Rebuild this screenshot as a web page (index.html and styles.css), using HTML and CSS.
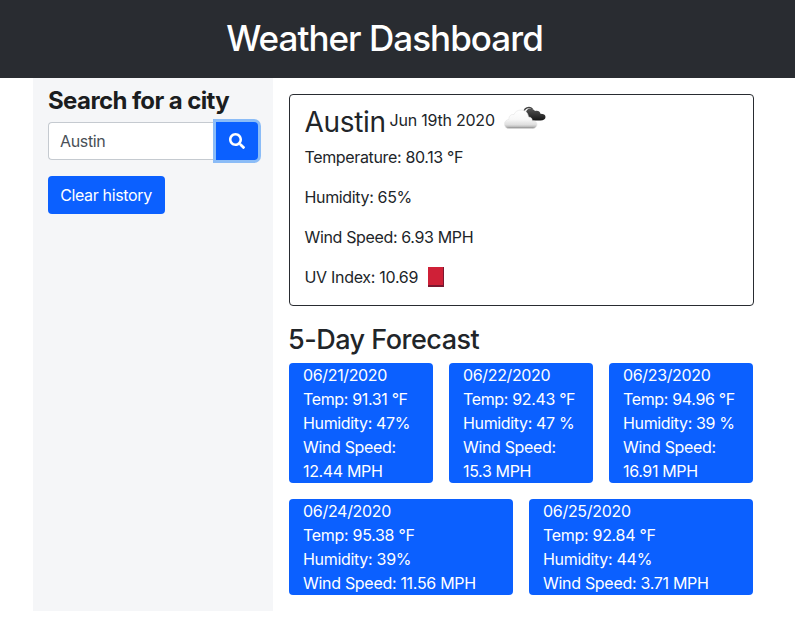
FILE: index.html
```html
<!DOCTYPE html>
<html lang="en">
<head>
<meta charset="utf-8">
<title>Weather Dashboard</title>
<link rel="stylesheet" href="styles.css">
</head>
<body>
<header class="banner"><h1>Weather Dashboard</h1></header>
<main class="container">
  <aside class="sidebar">
    <h2 class="search-title">Search for a city</h2>
    <form class="search">
      <input class="search-input" type="text" value="Austin" aria-label="City">
      <button class="search-button" type="button" aria-label="Search">
        <svg width="16" height="16" viewBox="0 0 512 512" fill="currentColor"><path d="M505 442.7L405.300 343c-4.500-4.500-10.600-7-17-7H372c27.600-35.300 44-79.700 44-128C416 93.100 322.900 0 208 0S0 93.100 0 208s93.100 208 208 208c48.300 0 92.700-16.400 128-44v16.300c0 6.400 2.500 12.500 7 17l99.700 99.700c9.400 9.400 24.600 9.400 33.900 0l28.300-28.300c9.400-9.400 9.400-24.600.1-34zM208 336c-70.700 0-128-57.200-128-128 0-70.700 57.200-128 128-128 70.700 0 128 57.200 128 128 0 70.700-57.200 128-128 128z"/></svg>
      </button>
    </form>
    <button class="clear-button" type="button">Clear history</button>
  </aside>
  <div class="content">
    <section class="current">
      <div class="current-head">
        <h2 class="city">Austin</h2>
        <span class="date">Jun 19th 2020</span>
        <svg class="weather-icon" width="42" height="24" viewBox="0 0 42 24">
          <defs>
            <linearGradient id="light" x1="0" y1="0" x2="0" y2="1"><stop offset="0" stop-color="#fff"/><stop offset=".5" stop-color="#f8f8f8"/><stop offset=".8" stop-color="#dedede"/><stop offset=".91" stop-color="#bbb"/><stop offset="1" stop-color="#777"/></linearGradient>
            <linearGradient id="dark" x1="0" y1="0" x2="0" y2="1"><stop offset="0" stop-color="#555"/><stop offset="1" stop-color="#151515"/></linearGradient>
          </defs>
          <path d="M19.500 7C20 3.500 22.500 1.500 25 1.500c1.500 0 2.500.5 3.500 1.500" fill="none" stroke="#444" stroke-width="1.300"/>
          <path d="M22 7c0-3 2-4.500 4-4.500 2 0 4 1 5 2.500 3-.8 5 .5 5.500 2.800 3 0 5 1.200 5 3.200s-2 3.500-5 3.500H26z" fill="url(#dark)"/>
          <path d="M5 22.500C2 22.500.5 20.500.5 18s2-4.500 4.500-4.500C4.500 10 7 8 10 8.500 11 5.500 14 4 17 4c4.500 0 7 3 7.500 7 3 0 4 2 3.500 4 3-.5 5 1.200 5 3.500s-2 4-4.500 4z" fill="url(#light)" stroke="#e4e4e4" stroke-width=".6"/>
        </svg>
      </div>
      <p>Temperature: 80.13 °F</p>
      <p>Humidity: 65%</p>
      <p>Wind Speed: 6.93 MPH</p>
      <p class="uv">UV Index: 10.69 <span class="uv-level"></span></p>
    </section>
    <h2 class="forecast-title">5-Day Forecast</h2>
    <section class="forecast">
      <article class="day">06/21/2020<br>Temp: 91.31 °F<br>Humidity: 47%<br>Wind Speed:<br>12.44 MPH</article>
      <article class="day">06/22/2020<br>Temp: 92.43 °F<br>Humidity: 47 %<br>Wind Speed:<br>15.3 MPH</article>
      <article class="day">06/23/2020<br>Temp: 94.96 °F<br>Humidity: 39 %<br>Wind Speed:<br>16.91 MPH</article>
      <article class="day wide">06/24/2020<br>Temp: 95.38 °F<br>Humidity: 39%<br>Wind Speed: 11.56 MPH</article>
      <article class="day wide">06/25/2020<br>Temp: 92.84 °F<br>Humidity: 44%<br>Wind Speed: 3.71 MPH</article>
    </section>
  </div>
</main>
</body>
</html>
```
FILE: styles.css
```css
* { box-sizing: border-box; }
body {
  margin: 0;
  background: #fff;
  color: #212529;
  font: 16px/24px Inter, "Liberation Sans", sans-serif;
  letter-spacing: -0.35px;
}
h1, h2, p { margin: 0; }
button, input { font: inherit; letter-spacing: inherit; }
.banner {
  height: 78px;
  padding: 16px 26px 0 0;
  background: #292c31;
  color: #fff;
  text-align: center;
}
.banner h1 { font-size: 35px; line-height: 45px; font-weight: 550; letter-spacing: -0.97px; }
.container { display: flex; width: 720px; height: 533px; margin-left: 33px; }
.sidebar { width: 240px; padding: 8px 15px; background: #f5f6f8; }
.search-title { font-size: 24px; line-height: 29px; font-weight: 700; letter-spacing: -0.6px; margin-bottom: 7px; color: #1b1d20; }
.search { display: flex; margin-bottom: 16px; }
.search-input {
  width: 168px;
  height: 38px;
  padding: 6px 11px;
  border: 1px solid #c5cad0;
  border-right: 0;
  border-radius: 4px 0 0 4px;
  background: #fff;
  color: #495057;
  outline: 0;
}
.search-button {
  display: flex;
  align-items: center;
  justify-content: center;
  width: 42px;
  height: 38px;
  padding: 0;
  border: 0;
  border-radius: 0 4px 4px 0;
  background: #0b60ff;
  color: #fff;
  box-shadow: 0 0 0 3px #8bbcf7;
}
.clear-button {
  width: 117px;
  height: 38px;
  padding: 0 1px 0 0;
  border: 0;
  border-radius: 4px;
  background: #0b60ff;
  color: #fff;
}
.content { width: 480px; padding: 16px 0 0 16px; }
.current {
  width: 465px;
  height: 212px;
  padding: 10px 14.5px;
  border: 1px solid #292c31;
  border-radius: 4px;
}
.current-head { display: flex; height: 40px; }
.city { font-size: 28px; line-height: 34px; font-weight: 430; letter-spacing: -0.3px; width: 85px; }
.date { width: 114.5px; line-height: 30px; letter-spacing: -0.22px; }
.weather-icon { margin-top: 1px; }
.current p { margin-bottom: 16px; }
.current .uv { display: flex; align-items: center; gap: 10px; letter-spacing: -0.3px; }
.uv-level { width: 16px; height: 20px; background: #cf2037; border: solid #7b1830; border-width: 0 1px 2px 0; }
.forecast-title { margin: 17px 0 7px -1px; font-size: 27px; line-height: 33px; font-weight: 550; letter-spacing: -0.5px; }
.forecast { display: flex; flex-wrap: wrap; gap: 16px; width: 464px; }
.day { width: 144px; padding-left: 14px; border-radius: 4px; background: #0b60ff; color: #fff; }
.wide { width: 224px; letter-spacing: -0.3px; }
```
